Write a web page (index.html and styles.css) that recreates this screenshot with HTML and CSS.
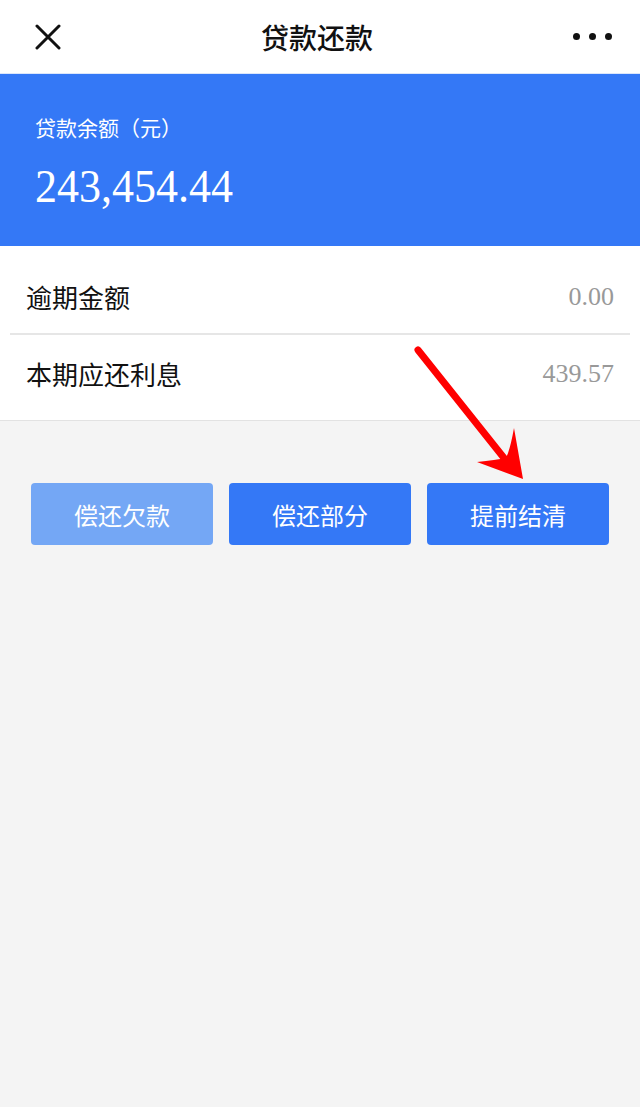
FILE: index.html
```html
<!DOCTYPE html>
<html lang="zh-CN">

<head>
    <meta charset="UTF-8">
    <meta name="viewport" content="width=device-width, initial-scale=1.0">
    <title>贷款还款</title>
    <link rel="stylesheet" href="styles.css">
</head>

<body>
    <header class="nav">
        <svg class="nav-close" width="26" height="26" viewBox="0 0 26 26">
            <path d="M2 2 L24 24 M24 2 L2 24" stroke="#111" stroke-width="3" stroke-linecap="round" />
        </svg>
        <h1 class="nav-title">贷款还款</h1>
        <div class="nav-more">
            <span></span><span></span><span></span>
        </div>
    </header>

    <section class="balance">
        <div class="balance-label">贷款余额（元）</div>
        <div class="balance-amount">243,454.44</div>
    </section>

    <ul class="info-list">
        <li class="info-row">
            <span class="info-name">逾期金额</span>
            <span class="info-value">0.00</span>
        </li>
        <li class="info-row">
            <span class="info-name">本期应还利息</span>
            <span class="info-value">439.57</span>
        </li>
    </ul>

    <div class="actions">
        <button class="btn btn-disabled">偿还欠款</button>
        <button class="btn">偿还部分</button>
        <button class="btn">提前结清</button>
    </div>

    <!-- red annotation arrow -->
    <svg class="mark-arrow" width="640" height="1107" viewBox="0 0 640 1107">
        <line x1="418" y1="350" x2="504" y2="458" stroke="#f00" stroke-width="7" stroke-linecap="round" />
        <path d="M523 479 L514 428 Q510 450 506 458 Q496 460 477 462 Z" fill="#f00" />
    </svg>
</body>

</html>
```

FILE: styles.css
```css
body {
    margin: 0;
    background-color: #f4f4f4;
    font-family: "Noto Sans CJK SC", "Liberation Sans", sans-serif;
    min-height: 1107px;
    position: relative;
}

.nav {
    height: 74px;
    background-color: white;
    display: flex;
    align-items: center;
    justify-content: space-between;
    padding: 0 28px 0 35px;
    box-sizing: border-box;
    border-bottom: 1px solid #dbe6fb;
}

.nav-title {
    margin: 0;
    font-size: 28px;
    font-weight: 500;
    color: #111;
}

.nav-more {
    display: flex;
    gap: 9px;
}

.nav-more span {
    width: 7px;
    height: 7px;
    border-radius: 50%;
    background-color: #111;
}

.balance {
    height: 172px;
    background-color: #3478f6;
    color: white;
    padding: 38px 35px 0;
    box-sizing: border-box;
}

.balance-label {
    font-size: 21px;
    line-height: 30px;
}

.balance-amount {
    font-family: "Liberation Serif", serif;
    font-size: 44px;
    line-height: 50px;
    margin-top: 22px;
    transform: scaleY(1.06);
    transform-origin: left bottom;
}

.info-list {
    list-style: none;
    margin: 0;
    padding: 0 10px;
    background-color: white;
    border-bottom: 1px solid #e2e2e2;
}

.info-row {
    height: 87px;
    display: flex;
    align-items: center;
    justify-content: space-between;
    padding: 0 16px;
    box-sizing: border-box;
}

.info-row:first-child {
    padding-top: 14px;
}

.info-row + .info-row {
    border-top: 2px solid #e6e6e6;
    padding-bottom: 8px;
}

.info-name {
    font-size: 26px;
    color: #111;
}

.info-value {
    font-family: "Liberation Serif", serif;
    font-size: 26px;
    color: #999;
}

.actions {
    display: flex;
    gap: 16px;
    padding: 62px 31px 0;
}

.btn {
    flex: 1;
    height: 62px;
    border: none;
    border-radius: 4px;
    background-color: #3478f6;
    color: white;
    font-family: "Noto Sans CJK SC", sans-serif;
    font-size: 24px;
    cursor: pointer;
}

.btn-disabled {
    background-color: #74a7f5;
}

.mark-arrow {
    position: absolute;
    left: 0;
    top: 0;
    pointer-events: none;
}
```
